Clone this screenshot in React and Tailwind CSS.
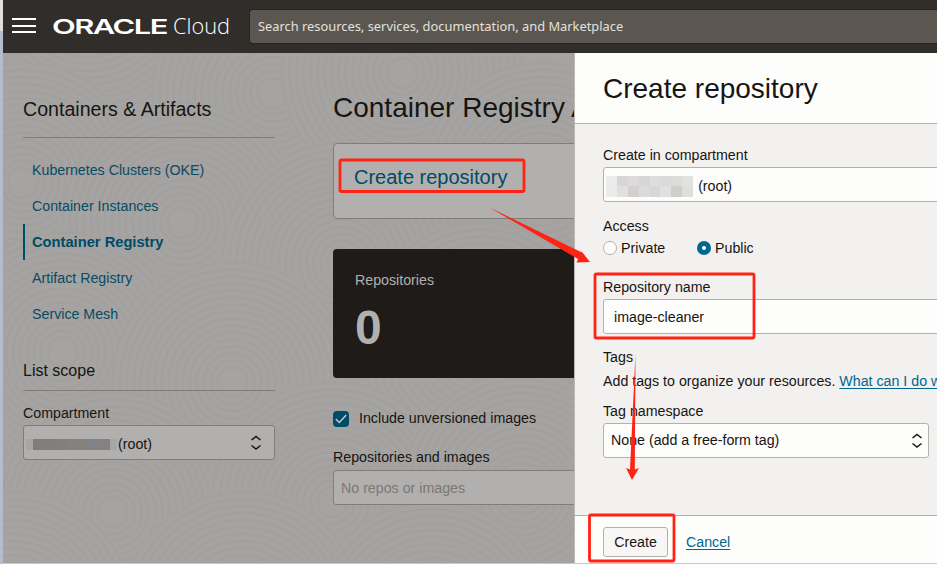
import React from "react";

const NAV = [
  { label: "Kubernetes Clusters (OKE)" },
  { label: "Container Instances" },
  { label: "Container Registry", active: true },
  { label: "Artifact Registry" },
  { label: "Service Mesh" },
];

const RINGS = [
  [85, -60], [270, 40], [20, 130], [400, 20], [540, 130], [180, 170], [340, 210],
  [60, 300], [230, 330], [480, 290], [110, 460], [330, 450], [520, 440], [240, 560], [10, 560], [430, 570],
];

function Texture() {
  return (
    <svg className="absolute inset-0 h-full w-full" viewBox="0 0 572 511" preserveAspectRatio="none">
      {RINGS.map(([cx, cy], i) => (
        <g key={i} fill="none" stroke="#9f9e9c" strokeWidth="2.500" strokeOpacity="0.4">
          <circle cx={cx} cy={cy} r="122" fill="#a5a4a2" stroke="none" />
          {[15, 22, 29, 36, 43, 50, 57, 64, 71, 78, 85, 92, 99, 106, 113, 120].map((r) => (
            <circle key={r} cx={cx} cy={cy} r={r} />
          ))}
        </g>
      ))}
    </svg>
  );
}

function UpDown() {
  return (
    <svg width="12" height="16" viewBox="0 0 12 16" fill="none" stroke="#161513" strokeWidth="1.5">
      <path d="M1.500 5 6 1.500 10.500 5M1.500 10.500 6 14l4.500-3.500" />
    </svg>
  );
}

function Mosaic({ rows }) {
  return (
    <div className="flex flex-col">
      {rows.map((row, i) => (
        <div key={i} className="flex">
          {row.map((c, j) => (
            <span key={j} className="h-[10.500px] w-[10.900px]" style={{ background: c }} />
          ))}
        </div>
      ))}
    </div>
  );
}

function Header() {
  return (
    <header className="flex h-[53px] shrink-0 items-center bg-[#312d2a]">
      <div className="-mt-[2px] ml-[9px] flex w-6 flex-col gap-[4.500px]">
        <span className="h-[2px] bg-white" />
        <span className="h-[2px] bg-white" />
        <span className="h-[2px] bg-white" />
      </div>
      <svg className="ml-[16px] shrink-0" width="180" height="30" viewBox="0 0 180 30" fill="#fff">
        <text x="0" y="21.500" fontFamily="Inter, sans-serif" fontSize="20.500" fontWeight="600" letterSpacing="-1" textLength="115" lengthAdjust="spacingAndGlyphs">ORACLE</text>
        <text x="121" y="21.500" fontFamily="'Open Sans', sans-serif" fontSize="22" fontWeight="300" textLength="57" lengthAdjust="spacingAndGlyphs">Cloud</text>
      </svg>
      <div className="ml-[17px] flex h-[35px] flex-1 items-center rounded-l border border-r-0 border-[#26221f] bg-[#5b5650] pl-2 font-['Noto_Sans',sans-serif] text-[12.860px] whitespace-nowrap text-[#e4e1dd]">
        Search resources, services, documentation, and Marketplace
      </div>
    </header>
  );
}

function Sidebar() {
  return (
    <aside className="flex w-[252px] shrink-0 flex-col">
      <h2 className="flex h-[85px] items-center border-b border-[#807d7a] pt-[29px] text-[19.600px]">Containers &amp; Artifacts</h2>
      <nav className="mt-[14px] flex flex-col">
        {NAV.map((n) => (
          <a
            key={n.label}
            className={
              n.active
                ? "flex h-9 items-center border-l-2 border-[#004b66] pt-px pl-[7px] text-[14.700px] font-bold text-[#004b66]"
                : "flex h-9 items-center pt-px pl-[9px] text-[#0a4a63]"
            }
          >
            {n.label}
          </a>
        ))}
      </nav>
      <h3 className="mt-[29px] flex h-[30px] items-start border-b border-[#807d7a] text-base leading-5">List scope</h3>
      <label className="mt-[12px] h-[22px] leading-5">Compartment</label>
      <div className="flex h-[35px] items-center rounded-[3px] border border-[#807d7a] bg-[#b1b0ae] pr-3 pl-[2px]">
        <div className="flex pt-[4px]">
          <span className="h-[11px] w-[7px] bg-[#aaa5a2]" />
          <span className="h-[11px] w-[22px] bg-[#7f7e7d]" />
          <span className="h-[11px] w-[11px] bg-[#82807f]" />
          <span className="h-[11px] w-[22px] bg-[#85817e]" />
          <span className="h-[11px] w-[11px] bg-[#808388]" />
          <span className="h-[11px] w-[11px] bg-[#85817f]" />
          <span className="h-[11px] w-[7px] bg-[#a4a6a8]" />
        </div>
        <span className="ml-[1px] pt-1">(root)</span>
        <span className="ml-auto"><UpDown /></span>
      </div>
    </aside>
  );
}

function Main() {
  return (
    <main className="ml-[58px] flex w-[360px] shrink-0 flex-col whitespace-nowrap">
      <h1 className="mt-[35px] h-[55px] text-[28px] leading-10">Container Registry Artifacts</h1>
      <div className="flex h-[76px] items-start rounded border border-[#807d7a] bg-[#b1b0ae] pt-[19px] pl-5 text-[20px] leading-7 text-[#004b66]">
        Create repository
      </div>
      <div className="mt-[30px] flex h-[129px] flex-col rounded bg-[#1f1b18] pl-[22px] text-[#b1b0ae]">
        <span className="mt-[21px] leading-5">Repositories</span>
        <span className="mt-[10px] text-[48px] leading-[56px] font-bold">0</span>
      </div>
      <div className="mt-[32px] flex h-[18px] items-center">
        <span className="flex h-4 w-4 items-center justify-center rounded-sm bg-[#004b66]">
          <svg width="12" height="10" viewBox="0 0 12 10" fill="none" stroke="#c7d0d2" strokeWidth="1.400"><path d="m.8 5 3.500 3.500L11.200 1" /></svg>
        </span>
        <span className="ml-[10px]">Include unversioned images</span>
      </div>
      <label className="mt-[19px] h-[23px] leading-5">Repositories and images</label>
      <div className="flex h-[35px] items-center rounded-[3px] border border-[#807d7a] bg-[#b1b0ae] pt-[2px] pl-[7px] text-[#7b7876]">
        No repos or images
      </div>
    </main>
  );
}

function Panel() {
  return (
    <section className="relative flex w-[363px] shrink-0 flex-col overflow-hidden border-l border-[#bbb8b5] bg-[#f3f1f0] whitespace-nowrap">
      <h1 className="flex h-[71px] shrink-0 items-center border-b border-[#b4b1ad] bg-[#fdfdfc] pt-[2px] pl-7 text-[28px]">Create repository</h1>
      <div className="flex flex-col pl-7">
        <label className="mt-[21px] h-[22px] leading-5">Create in compartment</label>
        <div className="flex h-[35px] w-[350px] items-center rounded-[3px] border border-[#b4b1ad] bg-[#fdfdfc] pl-[2px]">
          <div className="pt-[3px]">
            <Mosaic
              rows={[
                ["#ececea", "#d5d7d7", "#dcd9d9", "#d8d6d5", "#dcdddf", "#dadada", "#dbdbda", "#e1e1e0"],
                ["#ebebe9", "#dfe0df", "#d2cfce", "#dcdada", "#d5d8d7", "#dfe1e1", "#d0cecd", "#dedede"],
              ]}
            />
          </div>
          <span className="ml-[5px] pt-[5px]">(root)</span>
        </div>
        <span className="mt-[14px] h-[22px] leading-5">Access</span>
        <div className="flex h-5 items-center">
          <span className="h-[14px] w-[14px] rounded-full border border-[#b4b1ad] bg-[#fdfdfc]" />
          <span className="ml-1 w-[76px] pt-px">Private</span>
          <span className="flex h-[14px] w-[14px] items-center justify-center rounded-full bg-[#00688c]">
            <span className="h-1 w-1 rounded-full bg-white" />
          </span>
          <span className="ml-1 pt-px">Public</span>
        </div>
        <label className="mt-[19px] h-[22px] leading-5">Repository name</label>
        <div className="flex h-[35px] w-[350px] items-center rounded-[3px] border border-[#b4b1ad] bg-[#fdfdfc] pt-[2px] pl-[10px]">image-cleaner</div>
        <span className="mt-[13px] leading-5">Tags</span>
        <p className="mt-1 leading-5">
          Add tags to organize your resources. <a className="text-[#00688c] underline underline-offset-2">What can I do with tagging?</a>
        </p>
        <label className="mt-[10px] h-[22px] leading-5">Tag namespace</label>
        <div className="flex h-[35px] w-[326px] items-center justify-between rounded-[3px] border border-[#b4b1ad] bg-[#fdfdfc] pr-[5px] pl-[7px]">
          <span>None (add a free-form tag)</span>
          <span className="pt-px"><UpDown /></span>
        </div>
      </div>
      <footer className="mt-auto flex h-[48px] shrink-0 items-start border-t border-[#b4b1ad] bg-[#fdfdfc] pt-[11px] pl-7">
        <button className="h-[30px] w-[65px] rounded-[3px] border border-[#b4b1ad] bg-[#f8f7f6] pt-px">Create</button>
        <a className="ml-[18px] leading-[30px] text-[#00688c] underline underline-offset-2">Cancel</a>
      </footer>
    </section>
  );
}

function Annotations() {
  return (
    <svg className="pointer-events-none absolute inset-0" width="937" height="564" viewBox="0 0 937 564">
      <g fill="none" stroke="#ff2314" strokeWidth="2.800">
        <rect x="340" y="160" width="184" height="31.500" rx="1.500" />
        <rect x="595" y="274" width="159" height="64" rx="1.500" />
        <rect x="589.500" y="515" width="84.500" height="46" rx="1.500" />
      </g>
      <g fill="#ff2314">
        <path d="M489.500 207.500 582 252.500 580.500 250 590 262 576.500 262.500 578 259Z" />
        <path d="M635.500 354 634.800 469.500 639 468 632 480 626 468 630 469.500Z" />
      </g>
    </svg>
  );
}

export default function App() {
  return (
    <div className="relative flex h-[564px] w-[937px] overflow-hidden bg-[#312d2a] font-['Liberation_Sans',Arial,sans-serif] text-[14.220px] text-[#161513]">
      <div className="flex w-[3px] shrink-0 flex-col">
        <span className="h-[31px] bg-[#e0dfdd]" />
        <span className="flex-1 bg-[#b4bdcb]" />
      </div>
      <div className="flex min-w-0 flex-1 flex-col">
        <Header />
        <div className="flex h-[510px] shrink-0">
          <div className="relative w-[571px] shrink-0 overflow-hidden bg-[#a5a4a2]">
            <Texture />
            <div className="relative flex pl-5">
              <Sidebar />
              <Main />
            </div>
          </div>
          <Panel />
        </div>
        <div className="h-px bg-[#c9c7c5]" />
      </div>
      <Annotations />
    </div>
  );
}
